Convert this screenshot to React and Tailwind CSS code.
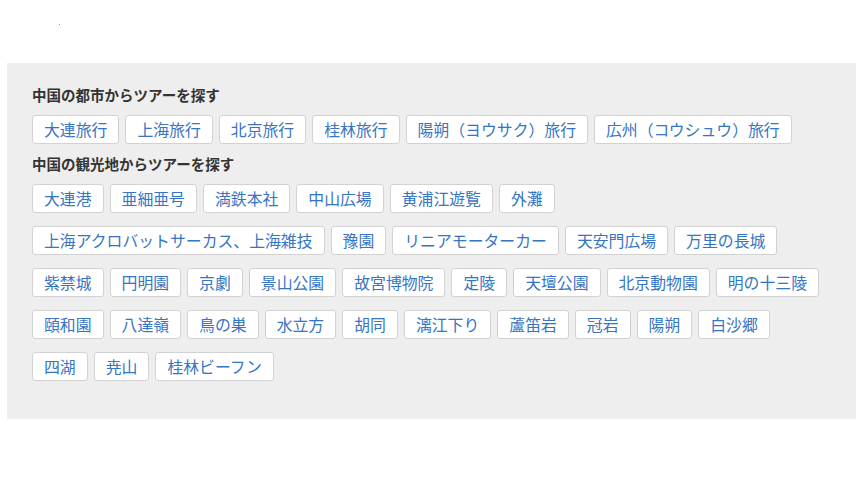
import React from "react";

const cities = ["大連旅行", "上海旅行", "北京旅行", "桂林旅行", "陽朔（ヨウサク）旅行", "広州（コウシュウ）旅行"];
const spots = [
  "大連港", "亜細亜号", "満鉄本社", "中山広場", "黄浦江遊覧", "外灘",
  "上海アクロバットサーカス、上海雑技", "豫園", "リニアモーターカー", "天安門広場", "万里の長城",
  "紫禁城", "円明園", "京劇", "景山公園", "故宮博物院", "定陵", "天壇公園", "北京動物園", "明の十三陵",
  "頤和園", "八達嶺", "鳥の巣", "水立方", "胡同", "漓江下り", "蘆笛岩", "冠岩", "陽朔", "白沙郷",
  "四湖", "尭山", "桂林ビーフン",
];

function Tag({ children }) {
  return (
    <a
      href="#"
      className="flex h-[29px] items-center rounded-[3px] border border-[#d2d2d2] bg-white px-[11px] text-[15.85px] leading-none text-[#3674c4] whitespace-nowrap"
    >
      {children}
    </a>
  );
}

function Heading({ children }) {
  return (
    <h3 className="h-[20px] text-[14.5px] font-bold leading-[20px] text-[#333333]">{children}</h3>
  );
}

export default function App() {
  return (
    <div
      className="min-h-[484px] w-[860px] bg-white"
      style={{ fontFamily: '"Noto Sans CJK JP", "Noto Sans", sans-serif' }}
    >
      <div className="h-[63px] pl-[59px] pt-[24px]">
        <div className="h-[1px] w-[1px] bg-[#999999]" />
      </div>
      <div className="ml-[7px] w-[849px] bg-[#eeeeee] pl-[25px] pr-[28px] pt-[22px] pb-[38px]">
        <Heading>中国の都市からツアーを探す</Heading>
        <div className="mt-[10px] flex flex-wrap gap-x-[6px] gap-y-[13px]">
          {cities.map((c) => (
            <Tag key={c}>{c}</Tag>
          ))}
        </div>
        <div className="mt-[10px]">
          <Heading>中国の観光地からツアーを探す</Heading>
        </div>
        <div className="mt-[10px] flex flex-wrap gap-x-[6px] gap-y-[13px]">
          {spots.map((c) => (
            <Tag key={c}>{c}</Tag>
          ))}
        </div>
      </div>
    </div>
  );
}
